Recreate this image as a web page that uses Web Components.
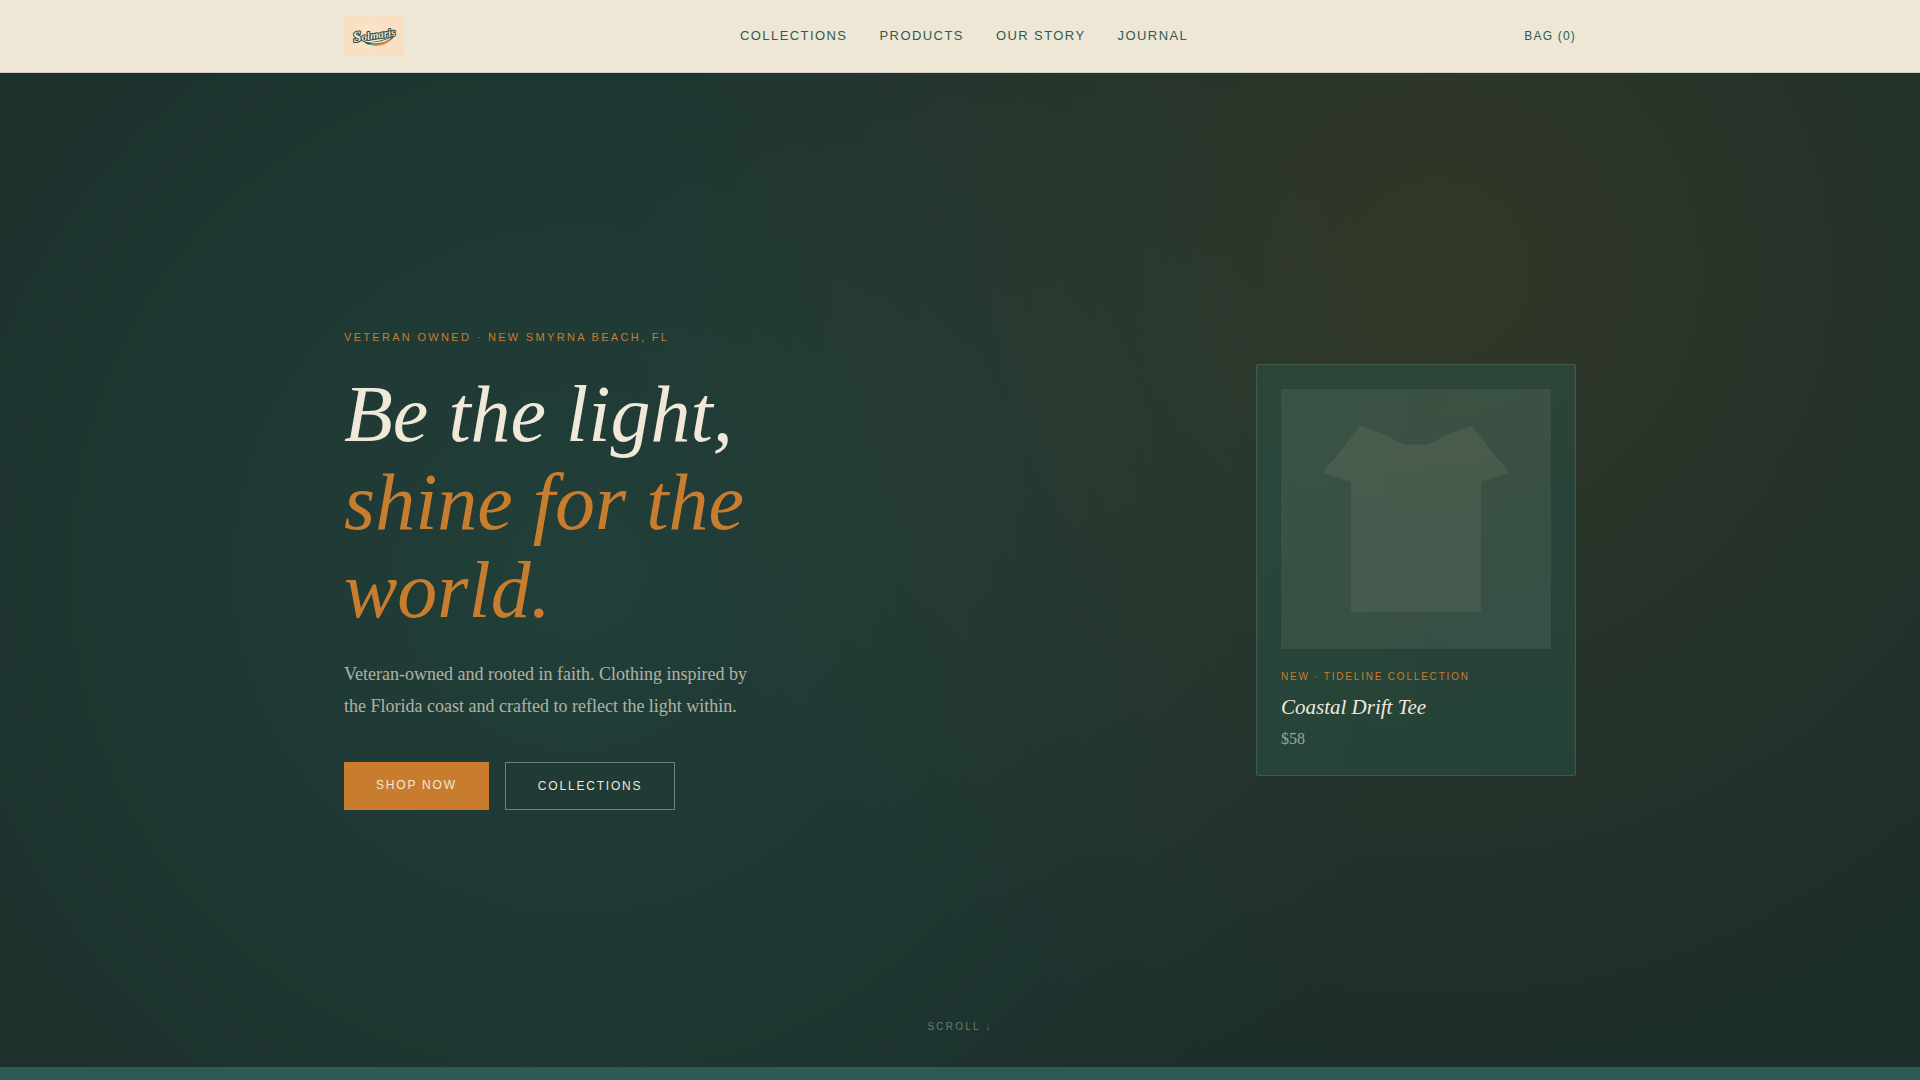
<!DOCTYPE html>
<html lang="en">
<head>
<meta charset="utf-8">
<meta name="viewport" content="width=device-width, initial-scale=1">
<title>Solmaris</title>
<style>
  :root {
    --cream: #f0e8d8;
    --teal: #2d5a52;
    --night: #1c2e2a;
    --amber: #c87d2e;
    --sans: "Liberation Sans", Arial, sans-serif;
    --serif: "Liberation Serif", "Times New Roman", serif;
  }
  body { margin: 0; font-family: var(--serif); background: var(--cream); color: var(--cream); }
</style>
</head>
<body>
<sol-page>
  <sol-header slot="header"></sol-header>
  <sol-hero slot="hero">
    <sol-button slot="actions" kind="solid">SHOP NOW</sol-button>
    <sol-button slot="actions" kind="outline">COLLECTIONS</sol-button>
    <sol-product-card slot="card">
      <span slot="label">NEW · TIDELINE COLLECTION</span>
      <span slot="name">Coastal Drift Tee</span>
      <span slot="price">$58</span>
    </sol-product-card>
  </sol-hero>
</sol-page>

<script>
const define = (name, html) => {
  const template = document.createElement('template');
  template.innerHTML = html;
  customElements.define(name, class extends HTMLElement {
    constructor() {
      super();
      this.attachShadow({ mode: 'open' }).append(template.content.cloneNode(true));
    }
  });
};

define('sol-page', `
  <style>
    :host { display: flex; flex-direction: column; height: 100vh; overflow: hidden; }
    ::slotted(*) { flex: none; }
    .band { flex: none; height: 64px; background: var(--teal); }
  </style>
  <slot name="header"></slot>
  <slot name="hero"></slot>
  <div class="band"></div>
`);

define('sol-logo', `
  <style>
    :host { display: block; }
    svg { display: block; width: 60px; height: 40px; }
    text { font: italic bold 11px var(--serif); }
    .cap { font-size: 15px; }
  </style>
  <svg viewBox="0 0 60 40" role="img" aria-label="Solmaris">
    <defs>
      <radialGradient id="paper" cx="50%" cy="50%" r="70%">
        <stop offset="0" stop-color="#fae5cc"/>
        <stop offset="1" stop-color="#f8dcbe"/>
      </radialGradient>
    </defs>
    <rect width="60" height="40" fill="url(#paper)"/>
    <path d="M20 26 C29 26.500 40 25 50 19 C50 20 49.500 22 47 24 C38 31 27 30 22 27.500Z" fill="#26483f"/>
    <path d="M23 26.500 C31 26.500 39 25.500 48 21 C42 27.500 31 28.500 23 26.500Z" fill="#fae5cc"/>
    <path d="M21 27.500 C26 28.500 33 28 38 26.500 C34 29.500 27 30 21 27.500Z" fill="#5fa39a"/>
    <path d="M30 29 C37 28 43 25 48.500 21.500 C44 28 37 31 30 29Z" fill="#e8873a"/>
    <g transform="rotate(-9 30 20)" fill="#f6e6cd" stroke="#26483f" stroke-linejoin="round" paint-order="stroke">
      <text x="9" y="23" stroke-width="2"><tspan class="cap">S</tspan>olmaris</text>
    </g>
  </svg>
`);

define('sol-header', `
  <style>
    :host { display: block; background: #efe7d6; border-bottom: 1px solid #cfcdbf; font-family: var(--sans); }
    .bar { box-sizing: border-box; max-width: 1280px; height: 72px; margin: 0 auto; padding: 0 24px;
           display: flex; align-items: center; justify-content: space-between; }
    nav { display: flex; gap: 32px; }
    a { color: var(--teal); text-decoration: none; white-space: nowrap; }
    nav a { font: 13px/14px var(--sans); letter-spacing: .11em; }
    button { font: 12px/14px var(--sans); letter-spacing: .1em; color: var(--teal); background: none; border: 0; padding: 0; cursor: pointer; }
  </style>
  <header class="bar">
    <a href="#home"><sol-logo></sol-logo></a>
    <nav aria-label="Main">
      <a href="#collections">COLLECTIONS</a>
      <a href="#products">PRODUCTS</a>
      <a href="#story">OUR STORY</a>
      <a href="#journal">JOURNAL</a>
    </nav>
    <button type="button">BAG (0)</button>
  </header>
`);

define('sol-button', `
  <style>
    :host { display: flex; }
    button { display: flex; align-items: flex-start; padding: 16px 32px; border: 0; border-radius: 0;
             font: 12px/14px var(--sans); letter-spacing: .15em; color: var(--cream); cursor: pointer; }
    :host([kind="solid"]) button { background: var(--amber); }
    :host([kind="outline"]) button { background: none; border: 1px solid rgba(240, 232, 216, .4); }
  </style>
  <button type="button"><slot></slot></button>
`);

define('sol-product-card', `
  <style>
    :host { display: block; box-sizing: border-box; width: 320px; padding: 24px;
            background: rgba(42, 98, 82, .36); border: 1px solid rgba(240, 232, 216, .13); border-radius: 2px; }
    .art { display: flex; align-items: center; justify-content: center; height: 260px; margin-bottom: 20px;
           background: linear-gradient(135deg, rgba(230, 230, 190, .08), rgba(240, 220, 216, .08)); }
    svg { width: 186px; height: 186px; }
    .label { font: 10px/16px var(--sans); letter-spacing: .18em; color: var(--amber); }
    .name { margin: 6px 0 4px; font: italic 21px/32px var(--serif); color: var(--cream); }
    .price { font-size: 16px; line-height: 24px; color: rgba(240, 232, 216, .6); }
    p, h2 { margin: 0; }
  </style>
  <article>
    <div class="art">
      <svg viewBox="0 0 20 20" aria-hidden="true">
        <path d="M4 0 L7 1 C7.800 1.800 8.800 2 9.500 2 H10.500 C11.200 2 12.200 1.800 13 1 L16 0 L20 5 L17 6 V20 H3 V6 L0 5 Z" fill="rgba(240,232,200,.08)"/>
      </svg>
    </div>
    <p class="label"><slot name="label"></slot></p>
    <h2 class="name"><slot name="name"></slot></h2>
    <p class="price"><slot name="price"></slot></p>
  </article>
`);

define('sol-hero', `
  <style>
    :host { display: grid; height: 92vh;
            background:
              radial-gradient(circle at 30% 50%, rgba(45, 98, 90, .33), transparent 60%),
              radial-gradient(circle at 75% 20%, rgba(200, 125, 30, .12), transparent 50%),
              var(--night); }
    .inner { grid-area: 1 / 1; box-sizing: border-box; width: 100%; max-width: 1280px; margin: 0 auto; padding: 0 24px;
             display: flex; align-items: center; justify-content: space-between; }
    .copy { width: 440px; }
    .eyebrow { margin: 0 0 26px; font: 11px/14px var(--sans); letter-spacing: .21em; color: var(--amber); white-space: nowrap; }
    h1 { margin: 0 0 24px; font: italic 80px/88px var(--serif); color: var(--cream); }
    h1 em { color: var(--amber); }
    .lead { margin: 0 0 40px; font-size: 18px; line-height: 32px; color: rgba(240, 232, 216, .7); }
    .actions { display: flex; gap: 16px; }
    .scroll { grid-area: 1 / 1; place-self: end center; margin-bottom: 32px; text-decoration: none;
              font: 10px/16px var(--sans); letter-spacing: .22em; color: rgba(240, 232, 216, .4); }
  </style>
  <div class="inner">
    <div class="copy">
      <p class="eyebrow">VETERAN OWNED · NEW SMYRNA BEACH, FL</p>
      <h1>Be the light,<br><em>shine for the<br>world.</em></h1>
      <p class="lead">Veteran-owned and rooted in faith. Clothing inspired by<br>the Florida coast and crafted to reflect the light within.</p>
      <div class="actions"><slot name="actions"></slot></div>
    </div>
    <slot name="card"></slot>
  </div>
  <a class="scroll" href="#more">SCROLL ↓</a>
`);
</script>
</body>
</html>
